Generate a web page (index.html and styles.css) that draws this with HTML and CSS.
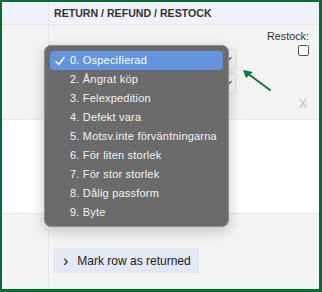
FILE: index.html
```html
<!DOCTYPE html>
<html lang="en">
<head>
  <meta charset="UTF-8">
  <title>Return / Refund / Restock</title>
  <link rel="stylesheet" href="styles.css">
</head>
<body>
  <div class="frame">
    <div class="grid">
      <!-- header -->
      <div class="cell head side"></div>
      <div class="cell head">RETURN / REFUND / RESTOCK</div>

      <!-- row with reason selects -->
      <div class="cell side grey"></div>
      <div class="cell grey row-main">
        <div class="selects">
          <div class="select"><span class="caret"></span></div>
          <div class="select"><span class="caret"></span></div>
        </div>
        <div class="restock">
          <label class="restock-label">Restock:</label>
          <span class="checkbox"></span>
          <span class="remove">X</span>
        </div>
      </div>

      <!-- empty row -->
      <div class="cell side white"></div>
      <div class="cell white row-empty"></div>

      <!-- action row -->
      <div class="cell side grey last"></div>
      <div class="cell grey last row-action">
        <button class="mark-btn"><span class="chev">&#x203A;</span>Mark row as returned</button>
      </div>
    </div>

    <!-- open select menu -->
    <ul class="menu">
      <li class="menu-item selected">
        <svg class="tick" width="10" height="10" viewBox="0 0 10 10">
          <polyline points="1,5.5 3.8,8.5 9,1.5" fill="none" stroke="#fff" stroke-width="1.6" stroke-linecap="round" stroke-linejoin="round"/>
        </svg>0. Ospecifierad</li>
      <li class="menu-item">2. Ångrat köp</li>
      <li class="menu-item">3. Felexpedition</li>
      <li class="menu-item">4. Defekt vara</li>
      <li class="menu-item">5. Motsv.inte förväntningarna</li>
      <li class="menu-item">6. För liten storlek</li>
      <li class="menu-item">7. För stor storlek</li>
      <li class="menu-item">8. Dålig passform</li>
      <li class="menu-item">9. Byte</li>
    </ul>

    <!-- annotation arrow -->
    <svg class="pointer" width="40" height="30" viewBox="0 0 40 30">
      <line x1="31" y1="26" x2="8" y2="9" stroke="#0c7a3c" stroke-width="2" stroke-linecap="round"/>
      <polygon points="4,6 14,8 7,14" fill="#0c7a3c"/>
    </svg>
  </div>
</body>
</html>
```

FILE: styles.css
```css
* {
  box-sizing: border-box;
}
body {
  margin: 0;
  font-family: "Liberation Sans", Arial, sans-serif;
  color: #222;
}
.frame {
  position: relative;
  width: 322px;
  height: 292px;
  border: 2px solid #0b6b36;
  border-right-width: 3px;
  border-bottom-width: 3px;
  overflow: hidden;
}
.grid {
  display: grid;
  grid-template-columns: 47px 1fr;
  grid-template-rows: 23px 95px 94px 1fr;
  height: 100%;
}
.cell {
  border-bottom: 1px solid #e6e6e6;
}
.cell.last {
  border-bottom: none;
}
.side {
  border-right: 1px solid #e6e6e6;
}
.head {
  background: #eff2fb;
  font-size: 10.6px;
  font-weight: bold;
  color: #333;
  padding: 5px 0 0 5px;
  border-bottom-color: #e4e7f0;
}
.grey {
  background: #f4f4f4;
}
.white {
  background: #fff;
}

/* row with selects */
.row-main {
  display: flex;
  justify-content: space-between;
  padding: 5px 10px 0 6px;
}
.selects {
  display: flex;
  flex-direction: column;
  gap: 3px;
  padding-top: 19px;
}
.select {
  position: relative;
  width: 181px;
  height: 21px;
  background: #f7f7f7;
  border: 1px solid #ddd;
  border-radius: 2px;
}
.caret {
  position: absolute;
  right: 3px;
  top: 8px;
  width: 4px;
  height: 1px;
  background: #333;
  transform: rotate(-45deg);
}
.restock {
  display: flex;
  flex-direction: column;
  align-items: flex-end;
}
.restock-label {
  font-size: 10.8px;
  color: #333;
  line-height: 13px;
}
.checkbox {
  width: 11px;
  height: 11px;
  margin-top: 2px;
  border: 1px solid #555;
  border-radius: 2px;
  background: #fff;
}
.remove {
  margin-top: 41px;
  margin-right: 2px;
  font-size: 12px;
  color: #bbb;
}

/* action row */
.row-action {
  padding: 34px 0 0 4px;
}
.mark-btn {
  display: flex;
  align-items: center;
  width: 146px;
  height: 25px;
  padding: 0 0 0 10px;
  border: none;
  background: #e2e8f4;
  font-family: "Liberation Sans", Arial, sans-serif;
  font-size: 12px;
  color: #222;
}
.chev {
  font-size: 16px;
  margin-right: 9px;
  line-height: 12px;
}

/* native-looking popup menu */
.menu {
  position: absolute;
  left: 42px;
  top: 43px;
  width: 185px;
  margin: 0;
  padding: 5px 5px 4px;
  list-style: none;
  background: #6b6b6b;
  border: 1px solid #8c8c8c;
  border-radius: 7px;
  box-shadow: 0 4px 14px rgba(0, 0, 0, 0.22);
}
.menu-item {
  position: relative;
  height: 19px;
  line-height: 19px;
  padding-left: 20px;
  white-space: nowrap;
  font-size: 11px;
  letter-spacing: 0.2px;
  color: #f4f4f4;
  border-radius: 4px;
}
.menu-item.selected {
  background: #6494df;
  color: #fff;
}
.tick {
  position: absolute;
  left: 5px;
  top: 5px;
}
.pointer {
  position: absolute;
  left: 237px;
  top: 62px;
}
```
